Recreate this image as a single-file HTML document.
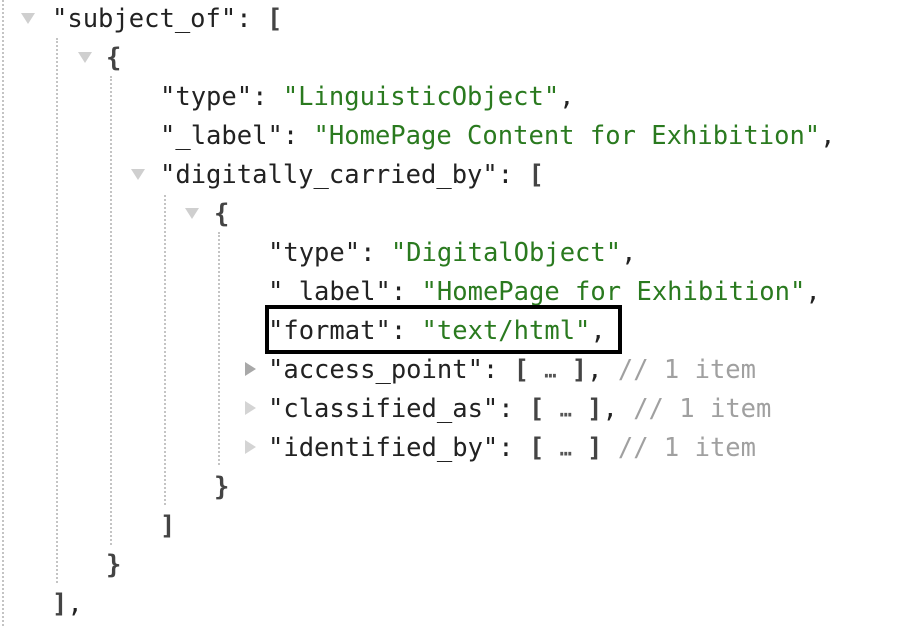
<!DOCTYPE html>
<html><head><meta charset="utf-8"><style>
html,body{margin:0;padding:0;background:#fff;width:912px;height:626px;overflow:hidden;position:relative}
.l{position:absolute;font-family:"DejaVu Sans Mono","Liberation Mono",monospace;font-size:25.5px;line-height:39px;height:39px;white-space:pre;color:#222}
.s{color:#2a7a1f}
.c{color:#a0a0a0}
.b{color:#444;font-weight:bold}
.e{font-size:20px;color:#555;font-weight:bold;vertical-align:middle}
.g{position:absolute;width:0;border-left:2px dotted #c4c4c4}
.td{position:absolute;width:0;height:0;border-left:7px solid transparent;border-right:7px solid transparent;border-top:11px solid #cfcfcf}
.tr{position:absolute;width:0;height:0;border-top:7px solid transparent;border-bottom:7px solid transparent;border-left:11px solid #d4d4d4}
.box{position:absolute;left:265px;top:305px;width:349px;height:41px;border:4px solid #000}
</style></head><body>
<div class="g" style="left:2px;top:0;height:626px"></div>
<div class="g" style="left:56px;top:38px;height:545px"></div>
<div class="g" style="left:110px;top:76px;height:469px"></div>
<div class="g" style="left:164px;top:195px;height:310px"></div>
<div class="g" style="left:218px;top:232px;height:233px"></div>

<div class="td" style="left:21px;top:13px"></div>
<div class="td" style="left:78px;top:52px"></div>
<div class="td" style="left:131px;top:169px"></div>
<div class="td" style="left:185px;top:208px"></div>
<div class="tr" style="left:245px;top:362px;border-left-color:#a8a8a8"></div>
<div class="tr" style="left:245px;top:401px"></div>
<div class="tr" style="left:245px;top:440px"></div>

<div class="l" style="left:52px;top:0px">"subject_of": <span class="b">[</span></div>
<div class="l" style="left:106px;top:39px"><span class="b">{</span></div>
<div class="l" style="left:160px;top:78px">"type": <span class="s">"LinguisticObject"</span>,</div>
<div class="l" style="left:160px;top:117px">"_label": <span class="s">"HomePage Content for Exhibition"</span>,</div>
<div class="l" style="left:160px;top:156px">"digitally_carried_by": <span class="b">[</span></div>
<div class="l" style="left:214px;top:195px"><span class="b">{</span></div>
<div class="l" style="left:268px;top:234px">"type": <span class="s">"DigitalObject"</span>,</div>
<div class="l" style="left:268px;top:273px">"_label": <span class="s">"HomePage for Exhibition"</span>,</div>
<div class="l" style="left:268px;top:312px">"format": <span class="s">"text/html"</span>,</div>
<div class="l" style="left:268px;top:351px">"access_point": <span class="b">[</span> <span class="e">…</span> <span class="b">]</span>, <span class="c">// 1 item</span></div>
<div class="l" style="left:268px;top:390px">"classified_as": <span class="b">[</span> <span class="e">…</span> <span class="b">]</span>, <span class="c">// 1 item</span></div>
<div class="l" style="left:268px;top:429px">"identified_by": <span class="b">[</span> <span class="e">…</span> <span class="b">]</span> <span class="c">// 1 item</span></div>
<div class="l" style="left:214px;top:468px"><span class="b">}</span></div>
<div class="l" style="left:160px;top:507px"><span class="b">]</span></div>
<div class="l" style="left:106px;top:546px"><span class="b">}</span></div>
<div class="l" style="left:52px;top:585px"><span class="b">]</span>,</div>
<div class="box"></div>
</body></html>
